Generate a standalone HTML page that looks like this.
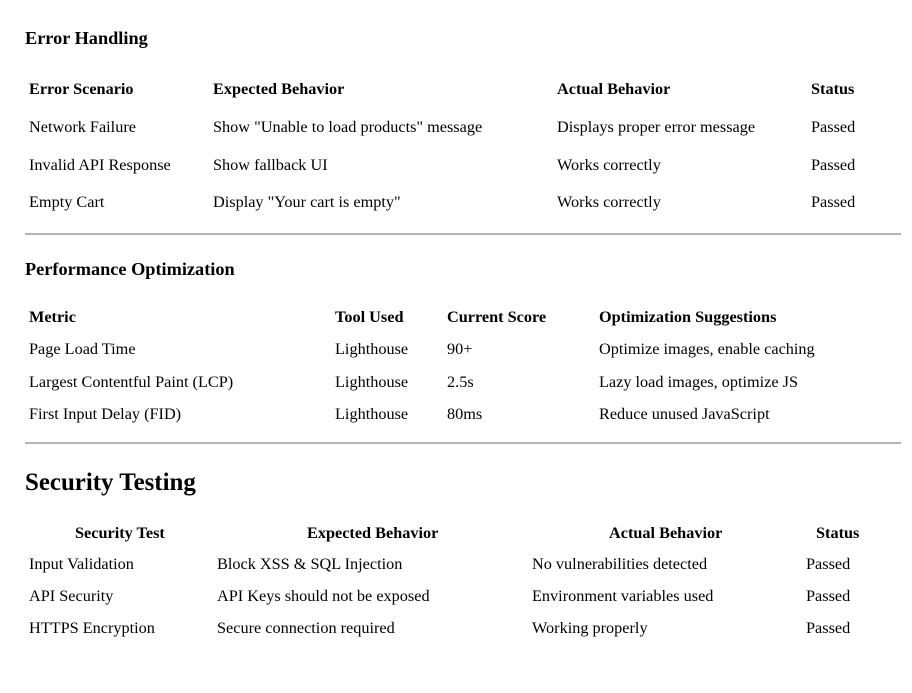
<!DOCTYPE html>
<html><head><meta charset="utf-8"><style>
body{margin:0;width:912px;height:693px;background:#fff;position:relative;font-family:"Liberation Serif",serif;color:#000;overflow:hidden}
div{position:absolute;white-space:nowrap;font-size:16.25px;line-height:20px;margin-top:1px}
.b{font-weight:bold}
.h{font-weight:bold;font-size:18.3px}
.hr{left:25px;width:876px;height:2px;background:#b4b4b4;margin-top:0}
</style></head><body>
<div class="h" style="left:25px;top:27px">Error Handling</div>
<div class="b" style="left:29px;top:78px">Error Scenario</div>
<div class="b" style="left:213px;top:78px">Expected Behavior</div>
<div class="b" style="left:557px;top:78px">Actual Behavior</div>
<div class="b" style="left:811px;top:78px">Status</div>
<div style="left:29px;top:116px">Network Failure</div>
<div style="left:213px;top:116px">Show "Unable to load products" message</div>
<div style="left:557px;top:116px">Displays proper error message</div>
<div style="left:811px;top:116px">Passed</div>
<div style="left:29px;top:154px">Invalid API Response</div>
<div style="left:213px;top:154px">Show fallback UI</div>
<div style="left:557px;top:154px">Works correctly</div>
<div style="left:811px;top:154px">Passed</div>
<div style="left:29px;top:191px">Empty Cart</div>
<div style="left:213px;top:191px">Display "Your cart is empty"</div>
<div style="left:557px;top:191px">Works correctly</div>
<div style="left:811px;top:191px">Passed</div>
<div class="hr" style="top:233px"></div>
<div class="h" style="left:25px;top:258px">Performance Optimization</div>
<div class="b" style="left:29px;top:306px">Metric</div>
<div class="b" style="left:335px;top:306px">Tool Used</div>
<div class="b" style="left:447px;top:306px">Current Score</div>
<div class="b" style="left:599px;top:306px">Optimization Suggestions</div>
<div style="left:29px;top:338px">Page Load Time</div>
<div style="left:335px;top:338px">Lighthouse</div>
<div style="left:447px;top:338px">90+</div>
<div style="left:599px;top:338px">Optimize images, enable caching</div>
<div style="left:29px;top:371px">Largest Contentful Paint (LCP)</div>
<div style="left:335px;top:371px">Lighthouse</div>
<div style="left:447px;top:371px">2.5s</div>
<div style="left:599px;top:371px">Lazy load images, optimize JS</div>
<div style="left:29px;top:403px">First Input Delay (FID)</div>
<div style="left:335px;top:403px">Lighthouse</div>
<div style="left:447px;top:403px">80ms</div>
<div style="left:599px;top:403px">Reduce unused JavaScript</div>
<div class="hr" style="top:442px"></div>
<div class="b" style="left:25px;top:467px;font-size:24.9px;line-height:30px">Security Testing</div>
<div class="b" style="left:75px;top:522px">Security Test</div>
<div class="b" style="left:307px;top:522px">Expected Behavior</div>
<div class="b" style="left:609px;top:522px">Actual Behavior</div>
<div class="b" style="left:816px;top:522px">Status</div>
<div style="left:29px;top:553px">Input Validation</div>
<div style="left:217px;top:553px">Block XSS &amp; SQL Injection</div>
<div style="left:532px;top:553px">No vulnerabilities detected</div>
<div style="left:806px;top:553px">Passed</div>
<div style="left:29px;top:585px">API Security</div>
<div style="left:217px;top:585px">API Keys should not be exposed</div>
<div style="left:532px;top:585px">Environment variables used</div>
<div style="left:806px;top:585px">Passed</div>
<div style="left:29px;top:617px">HTTPS Encryption</div>
<div style="left:217px;top:617px">Secure connection required</div>
<div style="left:532px;top:617px">Working properly</div>
<div style="left:806px;top:617px">Passed</div>
</body></html>
